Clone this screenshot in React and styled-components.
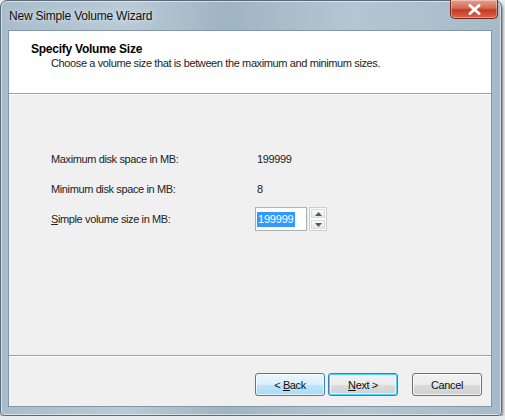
import React from "react";
import styled, { createGlobalStyle } from "styled-components";

const GlobalStyle = createGlobalStyle`
  html, body {
    margin: 0;
    padding: 0;
    background: #e9ecee;
  }
  body {
    font-family: "Segoe UI", "Liberation Sans", Arial, sans-serif;
    font-size: 11px;
    letter-spacing: -0.38px;
    color: #1a1a1a;
  }
`;

function App() {
  return (
    <>
      <GlobalStyle />
      <Window>
        <TitleBar>
          <Title>New Simple Volume Wizard</Title>
          <CloseButton aria-label="close">
            <svg width="13" height="11" viewBox="0 0 13 11">
              <path
                d="M2 1.5 L11 9.5 M11 1.5 L2 9.5"
                stroke="#fff"
                strokeWidth="3"
                strokeLinecap="round"
              />
            </svg>
          </CloseButton>
        </TitleBar>
        <Panel>
          <Header>
            <Heading>Specify Volume Size</Heading>
            <SubHeading>
              Choose a volume size that is between the maximum and minimum sizes.
            </SubHeading>
          </Header>
          <Body>
            <Form>
              <Label>Maximum disk space in MB:</Label>
              <Value>199999</Value>
              <Label>Minimum disk space in MB:</Label>
              <Value>8</Value>
              <Label>
                <u>S</u>imple volume size in MB:
              </Label>
              <SpinBox>
                <SpinInput>
                  <Selected>199999</Selected>
                </SpinInput>
                <Arrows>
                  <Arrow>
                    <svg width="7" height="4" viewBox="0 0 7 4">
                      <path d="M0 4 L3.5 0 L7 4 Z" fill="#4d5a66" />
                    </svg>
                  </Arrow>
                  <Arrow>
                    <svg width="7" height="4" viewBox="0 0 7 4">
                      <path d="M0 0 L3.5 4 L7 0 Z" fill="#4d5a66" />
                    </svg>
                  </Arrow>
                </Arrows>
              </SpinBox>
            </Form>
          </Body>
          <Footer>
            <Button variant="hover">
              {"< "}
              <u>B</u>ack
            </Button>
            <Button variant="default">
              <u>N</u>ext{" >"}
            </Button>
            <Spacer />
            <Button>Cancel</Button>
          </Footer>
        </Panel>
      </Window>
    </>
  );
}

export default App;

const Window = styled.div`
  width: 502px;
  height: 416px;
  box-sizing: border-box;
  padding: 0 9px 8px 7px;
  border-radius: 7px 7px 4px 4px;
  border: 1px solid #5b6a75;
  background: linear-gradient(
    90deg,
    #a8bccb 0%,
    #b9cad6 25%,
    #9fb4c3 45%,
    #b4c6d3 70%,
    #a6bac9 100%
  );
  box-shadow: inset 0 0 0 1px rgba(255, 255, 255, 0.55), 1px 2px 3px rgba(0, 0, 0, 0.45);
  display: flex;
  flex-direction: column;
`;

const TitleBar = styled.div`
  height: 29px;
  display: flex;
  align-items: flex-start;
  justify-content: space-between;
  flex-shrink: 0;
`;

const Title = styled.div`
  margin-top: 8px;
  margin-left: 1px;
  font-size: 12px;
  letter-spacing: -0.2px;
  color: #111;
  text-shadow: 0 0 6px rgba(255, 255, 255, 0.9);
`;

const CloseButton = styled.div`
  width: 46px;
  height: 18px;
  margin-top: -1px;
  margin-right: -6px;
  border: 1px solid #6b2a20;
  border-top: none;
  border-radius: 0 0 5px 5px;
  background: linear-gradient(180deg, #e8a08f 0%, #d26a54 45%, #c23a22 55%, #d9654a 100%);
  box-shadow: inset 0 0 0 1px rgba(255, 255, 255, 0.35);
  display: flex;
  align-items: center;
  justify-content: center;
`;

const Panel = styled.div`
  flex: 1;
  display: flex;
  flex-direction: column;
  border: 1px solid #8396a4;
  background: #f0f0f0;
`;

const Header = styled.div`
  height: 63px;
  box-sizing: border-box;
  background: #fff;
  border-bottom: 1px solid #a0a0a0;
  box-shadow: 0 1px 0 #fff;
  padding: 11px 0 0 22px;
`;

const Heading = styled.div`
  font-weight: bold;
  font-size: 12px;
  letter-spacing: -0.25px;
  color: #000;
`;

const SubHeading = styled.div`
  margin-top: 1px;
  padding-left: 20px;
  color: #222;
`;

const Body = styled.div`
  flex: 1;
  padding: 50px 0 0 42px;
  border-bottom: 1px solid #a0a0a0;
  box-shadow: 0 1px 0 #fff;
`;

const Form = styled.div`
  display: grid;
  grid-template-columns: 206px auto;
  grid-auto-rows: 30px;
  align-items: center;
  justify-items: start;
`;

const Label = styled.div`
  color: #222;
`;

const Value = styled.div`
  color: #222;
`;

const SpinBox = styled.div`
  display: flex;
  align-items: stretch;
  height: 24px;
  gap: 2px;
  margin-left: -2px;
`;

const SpinInput = styled.div`
  width: 52px;
  box-sizing: border-box;
  border: 1px solid #abadb3;
  border-top-color: #a4b8ca;
  background: #fff;
  display: flex;
  align-items: center;
  padding-left: 1px;
`;

const Selected = styled.span`
  background: #3399ff;
  color: #fff;
  line-height: 15px;
  padding: 0 1px;
  letter-spacing: -0.2px;
`;

const Arrows = styled.div`
  width: 16px;
  display: flex;
  flex-direction: column;
  border: 1px solid #c9ccd1;
  background: #fff;
`;

const Arrow = styled.div`
  flex: 1;
  display: flex;
  align-items: center;
  justify-content: center;
  margin: 1px;
  border: 1px solid #d8dbe0;
  background: linear-gradient(180deg, #fafafa, #e6e6e6);
`;

const Footer = styled.div`
  height: 50px;
  box-sizing: border-box;
  display: flex;
  align-items: flex-start;
  padding: 17px 9px 0 0;
  justify-content: flex-end;
  gap: 3px;
`;

const Spacer = styled.div`
  width: 8px;
`;

const Button = styled.div`
  width: 70px;
  height: 23px;
  box-sizing: border-box;
  border-radius: 3px;
  display: flex;
  align-items: center;
  justify-content: center;
  white-space: pre;
  color: #111;
  border: 1px solid
    ${(p) => (p.variant === "hover" ? "#3c7fb1" : p.variant === "default" ? "#3c7fb1" : "#707070")};
  background: ${(p) =>
    p.variant === "hover"
      ? "linear-gradient(180deg, #eaf6fd 0%, #d9f0fc 50%, #bee6fd 51%, #a7d9f5 100%)"
      : "linear-gradient(180deg, #f2f2f2 0%, #ebebeb 50%, #dddddd 51%, #cfcfcf 100%)"};
  box-shadow: ${(p) =>
    p.variant === "default"
      ? "inset 0 0 0 1px #48d4ff, inset 0 0 0 2px rgba(255,255,255,0.6)"
      : "inset 0 0 0 1px rgba(255,255,255,0.75)"};
`;
